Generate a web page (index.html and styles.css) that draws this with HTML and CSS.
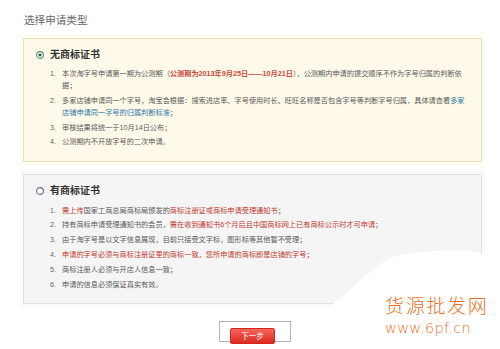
FILE: index.html
```html
<!DOCTYPE html>
<html lang="zh-CN">
<head>
<meta charset="utf-8">
<title>选择申请类型</title>
<link rel="stylesheet" href="styles.css">
</head>
<body>
<div class="page">
  <h1 class="title">选择申请类型</h1>

  <section class="panel panel-yellow">
    <div class="panel-head">
      <svg class="radio" width="8" height="8" viewBox="0 0 8 8"><circle cx="4" cy="4" r="3.4" fill="none" stroke="#4f8d7d" stroke-width="1.1"/><circle cx="4" cy="4" r="1.5" fill="#2f4f46"/></svg>
      <span>无商标证书</span>
    </div>
    <ol class="rules">
      <li><span class="num">1.</span><span class="txt"><span class="line">本次淘字号申请第一期为公测期（<b class="red">公测期为2013年9月25日——10月21日</b>），公测期内申请的提交顺序不作为字号归属的判断依</span><span class="line">据；</span></span></li>
      <li><span class="num">2.</span><span class="txt"><span class="line">多家店铺申请同一个字号，淘宝会根据：搜索进店率、字号使用时长、旺旺名称是否包含字号等判断字号归属，具体请查看<span class="blue">多家</span></span><span class="line"><span class="blue">店铺申请同一字号的归属判断标准</span>；</span></span></li>
      <li><span class="num">3.</span><span class="txt">审核结果将统一于10月14日公布；</span></li>
      <li><span class="num">4.</span><span class="txt">公测期内不开放字号的二次申请。</span></li>
    </ol>
  </section>

  <section class="panel panel-grey">
    <div class="panel-head">
      <svg class="radio" width="8" height="8" viewBox="0 0 8 8"><circle cx="4" cy="4" r="3.4" fill="#fff" stroke="#5d6b88" stroke-width="1.1"/></svg>
      <span>有商标证书</span>
    </div>
    <ol class="rules">
      <li><span class="num">1.</span><span class="txt"><span class="red">需上传</span>国家工商总局商标局颁发的<span class="red">商标注册证或商标申请受理通知书</span>；</span></li>
      <li><span class="num">2.</span><span class="txt">持有商标申请受理通知书的会员，<span class="red">需在收到通知书6个月后且中国商标网上已有商标公示时才可申请</span>；</span></li>
      <li><span class="num">3.</span><span class="txt">由于淘字号是以文字信息展现，目前只接受文字标，图形标等其他暂不受理；</span></li>
      <li><span class="num">4.</span><span class="txt red">申请的字号必须与商标注册证里的商标一致，您所申请的商标即是店铺的字号；</span></li>
      <li><span class="num">5.</span><span class="txt">商标注册人必须与开店人信息一致；</span></li>
      <li><span class="num">6.</span><span class="txt">申请的信息必须保证真实有效。</span></li>
    </ol>
  </section>

  <div class="actions">
    <div class="btn-frame"><button class="btn-next" type="button">下一步</button></div>
  </div>

  <svg class="blob" width="170" height="109" viewBox="330 240 170 109"><path d="M330 306 C 350 292, 368 270, 388 259 C 404 251, 440 250, 470 251 C 480 252, 486 255, 490 261 L 500 261 L 500 349 L 330 349 Z" fill="#fff"/></svg>
  <div class="watermark">
    <div class="wm-cn">货源批发网</div>
    <div class="wm-en">www.6pf.cn</div>
  </div>
</div>
</body>
</html>
```

FILE: styles.css
```css
* { box-sizing: border-box; }
html, body { margin: 0; padding: 0; background: #fff; }
body {
  width: 500px;
  height: 349px;
  overflow: hidden;
  font-family: "Liberation Sans", "Noto Sans CJK SC", sans-serif;
  color: #555;
}
.page {
  position: relative;
  width: 500px;
  height: 349px;
  padding: 0 0 0 23px;
}
.title {
  margin: 0 0 10px 0;
  padding: 12px 0 0 1px;
  font-size: 10.6px;
  line-height: 16px;
  font-weight: normal;
  color: #666;
}
.panel {
  width: 459px;
  border: 1px solid #e6dcb4;
  padding: 9px 12px 12.5px 12px;
}
.panel-yellow {
  background: #fef9e9;
  border-color: #e9dfb6;
  box-shadow: 0 0 0 3px #fefcf4;
}
.panel-grey {
  margin-top: 12.5px;
  background: #f5f5f5;
  border-color: #e2e2e2;
  box-shadow: 0 0 0 3px #fafafa;
}
.panel-head {
  display: flex;
  align-items: center;
  gap: 6px;
  height: 14px;
  line-height: 14px;
  font-size: 10px;
  font-weight: bold;
  color: #333;
}
.radio { display: block; flex: none; }
.rules {
  list-style: none;
  margin: 6px 0 0 14px;
  padding: 0;
  width: 418px;
  font-size: 7.2px;
  line-height: 12px;
}
.panel-grey .rules { margin-top: 6.3px; }
.rules li {
  display: flex;
  margin-bottom: 2.8px;
}
.rules li:last-child { margin-bottom: 0; }
.num { flex: none; width: 12px; color: #666; }
.txt { flex: 1; color: #595959; }
.line { display: block; white-space: nowrap; }
.red { color: #c0392e; }
b.red { font-weight: bold; color: #c94a3a; }
.blue { color: #2b78a8; }
.actions {
  margin-top: 17px;
  padding-left: 196px;
}
.btn-frame {
  width: 72px;
  height: 21px;
  border: 1px solid #b3b3b3;
  background: #fff;
  padding: 6px 0 0 10px;
}
.btn-next {
  display: block;
  width: 45px;
  height: 16px;
  margin: 0;
  padding: 0;
  border: 1px solid #d3261d;
  border-radius: 2px;
  background: linear-gradient(#f4665c, #dd2a20);
  color: #fff;
  font-family: "Noto Sans CJK SC", sans-serif;
  font-size: 7.5px;
  line-height: 14px;
  text-align: center;
}
.blob {
  position: absolute;
  left: 330px;
  top: 240px;
}
.watermark {
  position: absolute;
  left: 385px;
  top: 291px;
  color: #e8731f;
}
.wm-cn {
  font-family: "Noto Sans CJK SC", sans-serif;
  font-size: 19px;
  font-weight: 300;
  line-height: 28px;
  letter-spacing: 1.7px;
}
.wm-en {
  margin-top: 1px;
  font-family: "DejaVu Sans", sans-serif;
  font-size: 14.5px;
  font-weight: 200;
  line-height: 17px;
  letter-spacing: 0.3px;
}
```
